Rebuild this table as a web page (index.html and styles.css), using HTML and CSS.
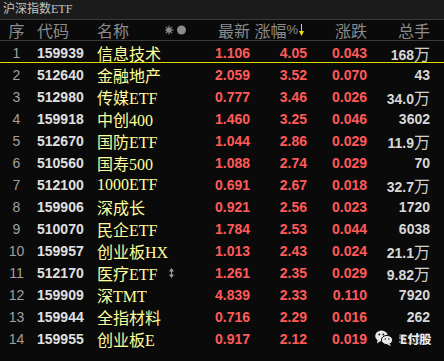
FILE: index.html
```html
<!DOCTYPE html>
<html lang="zh">
<head>
<meta charset="utf-8">
<link rel="stylesheet" href="styles.css">
</head>
<body>
<div class="panel">
  <div class="title">沪深指数ETF</div>
  <div class="row head">
    <span class="c-seq">序</span>
    <span class="c-code">代码</span>
    <span class="c-name">名称
      <svg class="hicons" width="22" height="10" viewBox="0 0 22 10">
        <g fill="#8a8a8a">
          <circle cx="4" cy="5" r="2.6"/>
          <rect x="3.5" y="0.5" width="1" height="9"/>
          <rect x="-0.5" y="4.5" width="9" height="1"/>
          <rect x="3.5" y="0.5" width="1" height="9" transform="rotate(45 4 5)"/>
          <rect x="3.5" y="0.5" width="1" height="9" transform="rotate(-45 4 5)"/>
          <circle cx="16.5" cy="5" r="4.5"/>
        </g>
      </svg>
    </span>
    <span class="c-last">最新</span>
    <span class="c-pct">涨幅<span class="pctsign">%</span><svg class="arrow" width="5" height="12" viewBox="0 0 5 12"><rect x="2" y="0" width="1" height="9" fill="#f0e000"/><path d="M0 7 L5 7 L2.5 12 Z" fill="#f0e000"/></svg></span>
    <span class="c-chg">涨跌</span>
    <span class="c-vol">总手</span>
  </div>

  <div class="row sel"><span class="c-seq">1</span><span class="c-code">159939</span><span class="c-name">信息技术</span><span class="c-last">1.106</span><span class="c-pct">4.05</span><span class="c-chg">0.043</span><span class="c-vol">168<i>万</i></span></div>
  <div class="row"><span class="c-seq">2</span><span class="c-code">512640</span><span class="c-name">金融地产</span><span class="c-last">2.059</span><span class="c-pct">3.52</span><span class="c-chg">0.070</span><span class="c-vol">43</span></div>
  <div class="row"><span class="c-seq">3</span><span class="c-code">512980</span><span class="c-name">传媒ETF</span><span class="c-last">0.777</span><span class="c-pct">3.46</span><span class="c-chg">0.026</span><span class="c-vol">34.0<i>万</i></span></div>
  <div class="row"><span class="c-seq">4</span><span class="c-code">159918</span><span class="c-name">中创400</span><span class="c-last">1.460</span><span class="c-pct">3.25</span><span class="c-chg">0.046</span><span class="c-vol">3602</span></div>
  <div class="row"><span class="c-seq">5</span><span class="c-code">512670</span><span class="c-name">国防ETF</span><span class="c-last">1.044</span><span class="c-pct">2.86</span><span class="c-chg">0.029</span><span class="c-vol">11.9<i>万</i></span></div>
  <div class="row"><span class="c-seq">6</span><span class="c-code">510560</span><span class="c-name">国寿500</span><span class="c-last">1.088</span><span class="c-pct">2.74</span><span class="c-chg">0.029</span><span class="c-vol">70</span></div>
  <div class="row"><span class="c-seq">7</span><span class="c-code">512100</span><span class="c-name">1000ETF</span><span class="c-last">0.691</span><span class="c-pct">2.67</span><span class="c-chg">0.018</span><span class="c-vol">32.7<i>万</i></span></div>
  <div class="row"><span class="c-seq">8</span><span class="c-code">159906</span><span class="c-name">深成长</span><span class="c-last">0.921</span><span class="c-pct">2.56</span><span class="c-chg">0.023</span><span class="c-vol">1720</span></div>
  <div class="row"><span class="c-seq">9</span><span class="c-code">510070</span><span class="c-name">民企ETF</span><span class="c-last">1.784</span><span class="c-pct">2.53</span><span class="c-chg">0.044</span><span class="c-vol">6038</span></div>
  <div class="row"><span class="c-seq">10</span><span class="c-code">159957</span><span class="c-name">创业板HX</span><span class="c-last">1.013</span><span class="c-pct">2.43</span><span class="c-chg">0.024</span><span class="c-vol">21.1<i>万</i></span></div>
  <div class="row"><span class="c-seq">11</span><span class="c-code">512170</span><span class="c-name">医疗ETF<svg class="swing" width="5" height="10" viewBox="0 0 5 10"><path d="M2.5 0 L5 3.5 L0 3.5 Z M2 3 H3 V7 H2 Z M0 6.5 L5 6.5 L2.5 10 Z" fill="#a0a0a0"/></svg></span><span class="c-last">1.261</span><span class="c-pct">2.35</span><span class="c-chg">0.029</span><span class="c-vol">9.82<i>万</i></span></div>
  <div class="row"><span class="c-seq">12</span><span class="c-code">159909</span><span class="c-name">深TMT</span><span class="c-last">4.839</span><span class="c-pct">2.33</span><span class="c-chg">0.110</span><span class="c-vol">7920</span></div>
  <div class="row"><span class="c-seq">13</span><span class="c-code">159944</span><span class="c-name">全指材料</span><span class="c-last">0.716</span><span class="c-pct">2.29</span><span class="c-chg">0.016</span><span class="c-vol">262</span></div>
  <div class="row"><span class="c-seq">14</span><span class="c-code">159955</span><span class="c-name">创业板E</span><span class="c-last">0.917</span><span class="c-pct">2.12</span><span class="c-chg">0.019</span><span class="c-vol">5198</span></div>

  <div class="mark">
    <svg width="18" height="16" viewBox="0 0 18 16">
      <ellipse cx="6.5" cy="6" rx="6.3" ry="5.4" fill="#e8e8e8"/>
      <path d="M2.5 10 L2 13.5 L5.5 11 Z" fill="#e8e8e8"/>
      <ellipse cx="12" cy="10" rx="5.6" ry="4.6" fill="#e8e8e8" stroke="#0a0a0a" stroke-width="1"/>
      <path d="M14.5 13.5 L16 16 L12 14.5 Z" fill="#e8e8e8"/>
      <circle cx="4.3" cy="4.5" r="0.9" fill="#0a0a0a"/>
      <circle cx="8.3" cy="4.5" r="0.9" fill="#0a0a0a"/>
      <circle cx="10.2" cy="9" r="0.7" fill="#0a0a0a"/>
      <circle cx="13.8" cy="9" r="0.7" fill="#0a0a0a"/>
    </svg>
    <span class="mark-text">E付股</span>
  </div>
</div>
</body>
</html>
```

FILE: styles.css
```css
* { box-sizing: border-box; }
html, body {
  margin: 0;
  padding: 0;
  background: #0a0a0a;
}
.panel {
  position: relative;
  width: 444px;
  height: 361px;
  overflow: hidden;
  background: #0a0a0a;
  font-family: "Liberation Sans", "Noto Sans CJK SC", sans-serif;
}
.title {
  height: 20px;
  background: #1b1b1b;
  border-bottom: 1px solid #3a3a3a;
  color: #c4c4c4;
  font-family: "Liberation Serif", "Noto Sans CJK SC", serif;
  font-size: 12px;
  line-height: 19px;
  padding-left: 3px;
}
.row {
  display: grid;
  grid-template-columns: 33px 64px 103px 50px 57px 60px 63px 14px;
  align-items: center;
  height: 22px;
  white-space: nowrap;
}
.row.head {
  height: 21px;
  border-bottom: 1px solid #3a3a3a;
  color: #8c8c8c;
  font-family: "Noto Sans CJK SC", sans-serif;
  font-size: 16px;
  line-height: 20px;
}
.row.sel {
  border-bottom: 1px solid #e0d800;
}
.c-seq {
  text-align: center;
  color: #a0a0a0;
  font-size: 14px;
}
.head .c-seq { color: #8c8c8c; font-size: 16px; }
.c-code {
  padding-left: 4px;
  color: #e0e0e0;
  font-weight: bold;
  font-size: 14px;
}
.head .c-code { color: #8c8c8c; font-weight: normal; font-size: 16px; }
.c-name {
  display: flex;
  align-items: center;
  color: #ffff9c;
  font-family: "Liberation Serif", "Noto Sans CJK SC", serif;
  font-size: 16px;
}
.head .c-name { color: #8c8c8c; font-family: "Noto Sans CJK SC", sans-serif; }
.hicons { margin-left: 36px; }
.swing { margin-left: 12px; }
.c-last, .c-pct, .c-chg {
  text-align: right;
  color: #ff5a5a;
  font-weight: bold;
  font-size: 14px;
}
.head .c-last, .head .c-pct, .head .c-chg {
  color: #8c8c8c;
  font-weight: normal;
  font-size: 16px;
}
.head .c-pct {
  display: flex;
  justify-content: flex-end;
  align-items: center;
  padding-right: 3px;
}
.pctsign {
  font-family: "Liberation Sans", sans-serif;
  font-size: 13px;
}
.arrow { margin-left: 1px; }
.c-vol {
  text-align: right;
  color: #d8d8d8;
  font-weight: bold;
  font-size: 14px;
}
.c-vol i {
  font-style: normal;
  font-weight: normal;
  font-size: 16px;
  font-family: "Noto Sans CJK SC", sans-serif;
  color: #d0d0d0;
}
.head .c-vol { color: #8c8c8c; font-weight: normal; font-size: 16px; }
.mark {
  position: absolute;
  left: 375px;
  top: 330px;
  display: flex;
  align-items: center;
  gap: 7px;
}
.mark-text {
  color: #f0f0f0;
  font-family: "Noto Sans CJK SC", sans-serif;
  font-size: 12px;
  font-weight: bold;
  background: rgba(10,10,10,0.55);
  line-height: 15px;
}
```
